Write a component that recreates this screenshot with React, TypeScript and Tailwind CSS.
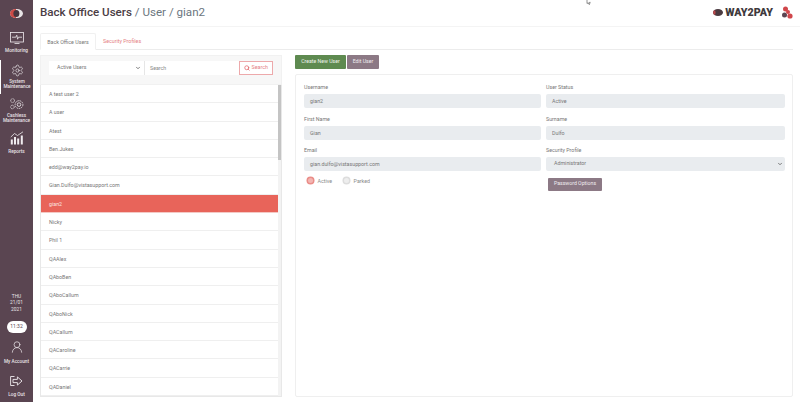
import { ChevronDown, Search, Settings, UserRound } from 'lucide-react';

const users = [
  'A test user 2', 'A user', 'Atest', 'Ben.Jukes', 'edd@way2pay.io', 'Gian.Dulfo@vistasupport.com', 'gian2', 'Nicky',
  'Phil 1', 'QAAlex', 'QAboBen', 'QAboCallum', 'QAboNick', 'QACallum', 'QACaroline', 'QACarrie', 'QADaniel',
];

function NavLabel({ children }: { children: React.ReactNode }) {
  return <span className="block h-[5px] text-[4.7px] leading-[5px] font-medium text-[#e9e3e7] text-center whitespace-nowrap">{children}</span>;
}

function MonitoringIcon() {
  return (
    <svg width="14" height="12" viewBox="0 0 14 12" fill="none" stroke="#f0ecef" strokeWidth="0.8">
      <rect x="0.5" y="0.5" width="13" height="9.5" />
      <path d="M2 5.2H5.8L6.8 3.2L7.6 7.2L8.4 5.2H12" />
      <path d="M4.5 11.5H9.5" />
    </svg>
  );
}

function CogsIcon() {
  return (
    <svg width="15" height="12" viewBox="0 0 15 12" fill="none" stroke="#f0ecef" strokeWidth="0.8">
      <circle cx="3.6" cy="2.6" r="1.9" strokeDasharray="1.1 0.5" />
      <circle cx="10" cy="6.6" r="3.9" strokeDasharray="1.6 0.7" />
      <circle cx="10" cy="6.6" r="1.8" />
      <circle cx="3.4" cy="9" r="1.8" strokeDasharray="1 0.5" />
    </svg>
  );
}

function ReportsIcon() {
  return (
    <svg width="14" height="14" viewBox="0 0 14 14" fill="none" stroke="#f0ecef" strokeWidth="0.8">
      <path d="M0.8 6L4.5 2.5L7.5 4.5L13 0.8" />
      <rect x="0.8" y="8.5" width="2" height="5" fill="#f0ecef" stroke="none" />
      <rect x="4" y="6" width="2" height="7.5" fill="#f0ecef" stroke="none" />
      <rect x="7.2" y="7.5" width="2" height="6" fill="#f0ecef" stroke="none" />
      <rect x="10.8" y="4.5" width="2" height="9" fill="#f0ecef" stroke="none" />
    </svg>
  );
}

function LogOutIcon() {
  return (
    <svg width="13" height="10" viewBox="0 0 13 10" fill="none" stroke="#f0ecef" strokeWidth="0.9">
      <path d="M4.5 0.5H0.6V9.5H4.5" />
      <path d="M3 3.4H7.4V0.9L12 5L7.4 9.1V6.6H3Z" />
    </svg>
  );
}

function Sidebar() {
  return (
    <aside className="w-[33px] h-full shrink-0 bg-[#5a4551] flex flex-col items-center">
      <div className="h-[27px] w-full flex items-center justify-center">
        <svg width="13" height="9" viewBox="0 0 13 9">
          <ellipse cx="6.5" cy="4.5" rx="6.5" ry="4.5" fill="#e9e5e7" />
          <path d="M6 0A6 4.5 0 0 0 6 9Z" fill="#cc4a46" />
          <ellipse cx="6.4" cy="4.5" rx="3" ry="3.6" fill="#46353f" />
        </svg>
      </div>
      <div className="w-full h-[33px] pt-[5px] flex flex-col items-center">
        <MonitoringIcon />
        <div className="mt-[4px]"><NavLabel>Monitoring</NavLabel></div>
      </div>
      <div className="w-full h-[34px] pt-[4px] flex flex-col items-center border-l border-white">
        <Settings size={13} color="#f0ecef" strokeWidth={1.2} />
        <div className="mt-[2px]">
          <NavLabel>System</NavLabel>
          <NavLabel>Maintenance</NavLabel>
        </div>
      </div>
      <div className="w-full h-[36px] pt-[4px] flex flex-col items-center">
        <CogsIcon />
        <div className="mt-[2.5px]">
          <NavLabel>Cashless</NavLabel>
          <NavLabel>Maintenance</NavLabel>
        </div>
      </div>
      <div className="w-full pt-[1px] flex flex-col items-center">
        <ReportsIcon />
        <div className="mt-[3.5px]"><NavLabel>Reports</NavLabel></div>
      </div>

      <div className="mt-auto pb-[5px] flex flex-col items-center w-full">
        <span className="text-[4.8px] leading-[6.3px] text-[#e9e3e7] text-center">THU<br />21/01<br />2021</span>
        <span className="mt-[8px] w-[20px] h-[12px] rounded-full bg-white text-[#5a4551] text-[5px] flex items-center justify-center">11:32</span>
        <UserRound size={14} color="#f0ecef" strokeWidth={1.2} className="mt-[7px]" />
        <div className="mt-[5px]"><NavLabel>My Account</NavLabel></div>
        <div className="mt-[12px] h-[10px]"><LogOutIcon /></div>
        <div className="mt-[6px]"><NavLabel>Log Out</NavLabel></div>
      </div>
    </aside>
  );
}

function Field({ label, value }: { label: string; value: string }) {
  return (
    <div className="flex flex-col">
      <label className="h-[13px] text-[5.3px] leading-[13px] text-[#777]">{label}</label>
      <div className="h-[14px] rounded-[2px] bg-[#e9ecef] px-[6px] text-[5.3px] leading-[14px] text-[#777]">{value}</div>
    </div>
  );
}

export default function App() {
  return (
    <div className="relative w-[800px] h-[402px] flex overflow-hidden bg-white font-['Roboto',sans-serif]">
      <Sidebar />
      <main className="flex-1 min-w-0 flex flex-col">
        {/* Title bar */}
        <header className="h-[27px] ml-[7px] flex items-center justify-between border-b border-[#f4f4f4]">
          <h1 className="text-[11.6px] font-medium text-[#4b3d45]">
            Back Office Users <span className="font-normal text-[#6b7680]">/ User / gian2</span>
          </h1>
          <div className="flex items-center gap-[9px] mr-[7px]">
            <div className="flex items-center gap-[2px]">
              <svg width="10" height="7" viewBox="0 0 10 7">
                <ellipse cx="5" cy="3.5" rx="5" ry="3.5" fill="#4a3a40" />
                <ellipse cx="1.4" cy="3.5" rx="1.2" ry="2.2" fill="#b9474a" />
              </svg>
              <span className="text-[10.7px] font-black text-[#3f3a3d]">WAY2PAY</span>
            </div>
            <svg width="11" height="13" viewBox="0 0 11 13">
              <circle cx="3.5" cy="3" r="2.5" fill="#d0464b" />
              <circle cx="2.5" cy="9" r="2.5" fill="#5a4551" />
              <circle cx="8" cy="10" r="2.6" fill="#d0464b" />
              <circle cx="6" cy="6" r="2" fill="#d0464b" />
            </svg>
          </div>
        </header>

        {/* Tabs */}
        <nav className="mt-[6px] ml-[7px] mr-[7px] h-[17px] flex border-b border-[#ececec]">
          <div className="w-[56px] h-[17px] border border-[#f0f0f0] border-b-white rounded-t-[2px] text-[5.3px] leading-[16px] text-center text-[#777]">Back Office Users</div>
          <div className="ml-[7px] text-[5.3px] leading-[16px] text-[#e57f84]">Security Profiles</div>
        </nav>

        <div className="flex-1 min-h-0 flex ml-[7px] mt-[5px] mb-[5px] mr-[7px] gap-[13px]">
          {/* User list column */}
          <section className="w-[242px] shrink-0 flex flex-col">
            <div className="h-[30px] shrink-0 bg-[#f7f7f7] border border-[#f1f1f1] flex items-start pt-[4.5px] pl-[8px] pr-[8px]">
              <div className="w-[96px] h-[14px] bg-white flex items-center justify-between pl-[8px] pr-[3px] text-[5.3px] text-[#777] border-r border-[#e6e6e6]">
                Active Users <ChevronDown size={6} strokeWidth={3} color="#555" />
              </div>
              <div className="flex-1 h-[14px] bg-white pl-[5px] text-[5.3px] leading-[14px] text-[#888]">Search</div>
              <div className="w-[34px] h-[14px] border border-[#eda9ab] bg-white flex items-center justify-center gap-[1.5px] text-[5.3px] text-[#e57f84]">
                <Search size={6} strokeWidth={3} color="#e0646a" /> Search
              </div>
            </div>
            <div className="relative flex-1 min-h-0 overflow-hidden border border-[#e8e8e8] border-t-0">
              <ul>
                {users.map((u) => (
                  <li
                    key={u}
                    className={
                      u === 'gian2'
                        ? 'h-[18.3px] mr-[3px] pl-[8px] bg-[#e8645a] text-[5.3px] leading-[18px] text-[#fbe3e0] border-b border-[#f4c9c5]'
                        : 'h-[18.3px] mr-[3px] pl-[8px] text-[5.3px] leading-[18px] text-[#777] border-b border-[#efefef]'
                    }
                  >
                    {u}
                  </li>
                ))}
              </ul>
              {/* Scrollbar */}
              <div className="absolute right-0 top-0 bottom-0 w-[3px] bg-[#f3f3f3]">
                <div className="h-[75px] bg-[#c4c4c4]" />
              </div>
            </div>
          </section>

          {/* Details column */}
          <section className="flex-1 min-w-0 flex flex-col">
            <div className="flex gap-[1px] h-[14px]">
              <button className="w-[51px] rounded-[1px] bg-[#5e8a50] text-[5.2px] text-[#eef3ec]">Create New User</button>
              <button className="w-[32px] rounded-[1px] bg-[#8c7985] text-[5.2px] text-[#f1edf0]">Edit User</button>
            </div>
            <div className="mt-[5px] flex-1 border border-[#efefef] rounded-[2px] pl-[8px] pr-[7px] pt-[6px]">
              <div className="grid grid-cols-[237px_239px] gap-x-[5px] gap-y-[4.5px]">
                <Field label="Username" value="gian2" />
                <Field label="User Status" value="Active" />
                <Field label="First Name" value="Gian" />
                <Field label="Surname" value="Dulfo" />
                <Field label="Email" value="gian.dulfo@vistasupport.com" />
                <div className="flex flex-col">
                  <label className="h-[13px] text-[5.3px] leading-[13px] text-[#777]">Security Profile</label>
                  <div className="h-[14px] rounded-[2px] bg-[#e9ecef] pl-[8px] pr-[2px] flex items-center justify-between text-[5.3px] text-[#777]">
                    Administrator <ChevronDown size={6} strokeWidth={3} color="#555" />
                  </div>
                </div>
              </div>
              <div className="grid grid-cols-[237px_239px] gap-x-[5px]">
                <div className="flex items-start pt-[7px] pl-[4px] text-[5.3px] leading-[6px] text-[#8a8a8a]">
                  <span className="w-[5px] h-[5px] rounded-full bg-[#f3b5b2] ring-[1.5px] ring-[#ea8d88]" />
                  <span className="ml-[4.5px]">Active</span>
                  <span className="ml-[12px] w-[5px] h-[5px] rounded-full bg-[#eee] ring-[1.5px] ring-[#ddd]" />
                  <span className="ml-[4.5px]">Parked</span>
                </div>
                <div className="pt-[6.5px] pl-[2px]">
                  <button className="block w-[54px] h-[13.5px] rounded-[1px] bg-[#8c7985] text-[5.2px] text-[#f1edf0]">Password Options</button>
                </div>
              </div>
            </div>
          </section>
        </div>
      </main>
      {/* Mouse cursor caught in the screenshot */}
      <svg className="absolute left-[586px] top-0" width="6" height="5" viewBox="0 0 6 5" fill="none" stroke="#666" strokeWidth="0.7">
        <path d="M1 0V3.5L2.2 2.8L3 4.5L4 4L3.2 2.4H4.6" />
      </svg>
    </div>
  );
}
